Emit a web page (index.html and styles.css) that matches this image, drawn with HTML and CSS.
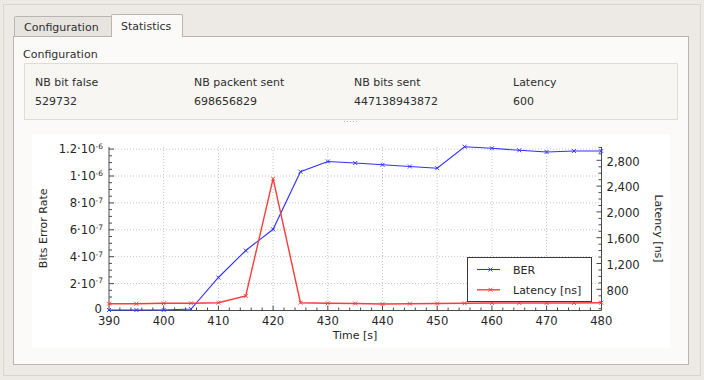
FILE: index.html
```html
<!DOCTYPE html>
<html>
<head>
<meta charset="utf-8">
<link rel="stylesheet" href="styles.css">
</head>
<body>
<div class="window">
  <div class="frame">
    <div class="tabbar">
      <div class="tab">Configuration</div>
      <div class="tab tab-active">Statistics</div>
    </div>
    <div class="pane">
      <div class="group-title">Configuration</div>
      <div class="group">
        <div class="cell">NB bit false</div>
        <div class="cell">NB packent sent</div>
        <div class="cell">NB bits sent</div>
        <div class="cell">Latency</div>
        <div class="cell">529732</div>
        <div class="cell">698656829</div>
        <div class="cell">447138943872</div>
        <div class="cell">600</div>
      </div>
      <div class="splitter"><div class="grip"></div></div>
      <div class="chart">
        <svg class="plot" width="638" height="214" viewBox="32 133 638 214" xmlns="http://www.w3.org/2000/svg">
          <!-- grid -->
          <g class="grid">
            <path d="M163.7 146V309M218.4 146V309M273.1 146V309M327.8 146V309M382.5 146V309M437.2 146V309M491.9 146V309M546.6 146V309"/>
            <path d="M109 282.6H601M109 255.7H601M109 228.8H601M109 201.9H601M109 175H601M109 148.1H601"/>
          </g>
          <!-- axes -->
          <g class="axis">
            <path d="M109 146V309.5H601.5V146"/>
            <!-- left major -->
            <path d="M109 309.5h5M109 282.6h5M109 255.7h5M109 228.8h5M109 201.9h5M109 175h5M109 148.1h5"/>
            <!-- left minor -->
            <path d="M109 302.8h3M109 296h3M109 289.3h3M109 275.9h3M109 269.2h3M109 262.4h3M109 249h3M109 242.3h3M109 235.5h3M109 222.1h3M109 215.4h3M109 208.6h3M109 195.2h3M109 188.5h3M109 181.7h3M109 168.3h3M109 161.6h3M109 154.8h3"/>
            <!-- right major -->
            <path d="M601.5 288.3h-5M601.5 262.5h-5M601.5 236.7h-5M601.5 210.9h-5M601.5 185.1h-5M601.5 159.3h-5"/>
            <!-- right minor -->
            <path d="M601.5 307.7h-3M601.5 301.2h-3M601.5 294.8h-3M601.5 281.9h-3M601.5 275.4h-3M601.5 269h-3M601.5 256.1h-3M601.5 249.6h-3M601.5 243.2h-3M601.5 230.3h-3M601.5 223.8h-3M601.5 217.4h-3M601.5 204.5h-3M601.5 198h-3M601.5 191.6h-3M601.5 178.7h-3M601.5 172.2h-3M601.5 165.8h-3M601.5 152.9h-3M601.5 146.4h-3"/>
            <!-- bottom major -->
            <path d="M163.7 309.5v-5M218.4 309.5v-5M273.1 309.5v-5M327.8 309.5v-5M382.5 309.5v-5M437.2 309.5v-5M491.9 309.5v-5M546.6 309.5v-5"/>
            <!-- bottom minor -->
            <path d="M119.9 309.5v-3M130.9 309.5v-3M141.8 309.5v-3M152.8 309.5v-3M174.6 309.5v-3M185.6 309.5v-3M196.5 309.5v-3M207.5 309.5v-3M229.3 309.5v-3M240.3 309.5v-3M251.2 309.5v-3M262.2 309.5v-3M284 309.5v-3M295 309.5v-3M305.9 309.5v-3M316.9 309.5v-3M338.7 309.5v-3M349.7 309.5v-3M360.6 309.5v-3M371.6 309.5v-3M393.4 309.5v-3M404.4 309.5v-3M415.3 309.5v-3M426.3 309.5v-3M448.1 309.5v-3M459.1 309.5v-3M470 309.5v-3M481 309.5v-3M502.8 309.5v-3M513.8 309.5v-3M524.7 309.5v-3M535.7 309.5v-3M557.5 309.5v-3M568.5 309.5v-3M579.4 309.5v-3M590.4 309.5v-3"/>
          </g>
          <!-- tick labels -->
          <g class="ticklabels">
            <text x="103" y="152.4" text-anchor="end">1.2·10<tspan class="sup" dy="-4.5">-6</tspan></text>
            <text x="103" y="179.3" text-anchor="end">1·10<tspan class="sup" dy="-4.5">-6</tspan></text>
            <text x="103" y="206.2" text-anchor="end">8·10<tspan class="sup" dy="-4.5">-7</tspan></text>
            <text x="103" y="233.1" text-anchor="end">6·10<tspan class="sup" dy="-4.5">-7</tspan></text>
            <text x="103" y="260" text-anchor="end">4·10<tspan class="sup" dy="-4.5">-7</tspan></text>
            <text x="103" y="286.9" text-anchor="end">2·10<tspan class="sup" dy="-4.5">-7</tspan></text>
            <text x="102" y="312" text-anchor="end">0</text>

            <text x="109" y="323.5" text-anchor="middle">390</text>
            <text x="163.7" y="323.5" text-anchor="middle">400</text>
            <text x="218.4" y="323.5" text-anchor="middle">410</text>
            <text x="273.1" y="323.5" text-anchor="middle">420</text>
            <text x="327.8" y="323.5" text-anchor="middle">430</text>
            <text x="382.5" y="323.5" text-anchor="middle">440</text>
            <text x="437.2" y="323.5" text-anchor="middle">450</text>
            <text x="491.9" y="323.5" text-anchor="middle">460</text>
            <text x="546.6" y="323.5" text-anchor="middle">470</text>
            <text x="601.3" y="323.5" text-anchor="middle">480</text>

            <text x="606.5" y="164.6">2,800</text>
            <text x="606.5" y="190.4">2,400</text>
            <text x="606.5" y="216.2">2,000</text>
            <text x="606.5" y="242">1,600</text>
            <text x="606.5" y="267.8">1,200</text>
            <text x="606.5" y="293.6">800</text>
          </g>
          <!-- axis titles -->
          <g class="titles">
            <text transform="translate(47.3 227.3) rotate(-90)" text-anchor="middle">Bits Error Rate</text>
            <text transform="translate(654.8 227.5) rotate(90)" text-anchor="middle">Latency [ns]</text>
            <text x="355" y="337.5" text-anchor="middle">Time [s]</text>
          </g>
          <!-- curves -->
          <polyline class="ber" points="109,309 136.35,309 163.7,309 191.05,308 218.4,276.5 245.75,249.5 273.1,228.3 300.45,170.7 327.8,160.5 355.15,162 382.5,163.8 409.85,165.5 437.2,167.2 464.55,145.7 491.9,147.3 519.25,149.3 546.6,151 573.95,150 601.3,150"/>
          <path class="ber-mk" d="M107 307l4 4m-4 0l4-4M134.4 307l4 4m-4 0l4-4M161.7 307l4 4m-4 0l4-4M189 306l4 4m-4 0l4-4M216.4 274.5l4 4m-4 0l4-4M243.8 247.5l4 4m-4 0l4-4M271.1 226.3l4 4m-4 0l4-4M298.5 168.7l4 4m-4 0l4-4M325.8 158.5l4 4m-4 0l4-4M353.2 160l4 4m-4 0l4-4M380.5 161.8l4 4m-4 0l4-4M407.9 163.5l4 4m-4 0l4-4M435.2 165.2l4 4m-4 0l4-4M462.6 143.7l4 4m-4 0l4-4M489.9 145.3l4 4m-4 0l4-4M517.3 147.3l4 4m-4 0l4-4M544.6 149l4 4m-4 0l4-4M572 148l4 4m-4 0l4-4M599.3 148l4 4m-4 0l4-4"/>
          <polyline class="lat" points="109,302.7 136.35,302.7 163.7,302.3 191.05,302.3 218.4,301.7 245.75,295 273.1,177.7 300.45,301.7 327.8,302.3 355.15,302.5 382.5,303 409.85,302.7 437.2,302.5 464.55,302.3 491.9,302 519.25,302 546.6,302 573.95,302 601.3,301.7"/>
          <path class="lat-mk" d="M107 300.7l4 4m-4 0l4-4M134.4 300.7l4 4m-4 0l4-4M161.7 300.3l4 4m-4 0l4-4M189 300.3l4 4m-4 0l4-4M216.4 299.7l4 4m-4 0l4-4M243.8 293l4 4m-4 0l4-4M271.1 175.7l4 4m-4 0l4-4M298.5 299.7l4 4m-4 0l4-4M325.8 300.3l4 4m-4 0l4-4M353.2 300.5l4 4m-4 0l4-4M380.5 301l4 4m-4 0l4-4M407.9 300.7l4 4m-4 0l4-4M435.2 300.5l4 4m-4 0l4-4M462.6 300.3l4 4m-4 0l4-4M489.9 300l4 4m-4 0l4-4M517.3 300l4 4m-4 0l4-4M544.6 300l4 4m-4 0l4-4M572 300l4 4m-4 0l4-4M599.3 299.7l4 4m-4 0l4-4"/>
          <!-- legend -->
          <g class="legend">
            <rect x="467.5" y="256.5" width="124" height="44"/>
            <path class="ber" d="M477 268.5H500"/>
            <path class="ber-mk" d="M488.5 266.5l4 4m-4 0l4-4"/>
            <text x="513" y="272.5">BER</text>
            <path class="lat" d="M477 288.8H500"/>
            <path class="lat-mk" d="M488.5 286.8l4 4m-4 0l4-4"/>
            <text x="513" y="292.8">Latency [ns]</text>
          </g>
        </svg>
      </div>
    </div>
  </div>
</div>
</body>
</html>
```

FILE: styles.css
```css
html, body {
  margin: 0;
  padding: 0;
}
body {
  width: 704px;
  height: 380px;
  overflow: hidden;
  background: #edeae6;
  font-family: "DejaVu Sans", "Liberation Sans", sans-serif;
  font-size: 11px;
  color: #2e2e2e;
}
.window {
  height: 380px;
  padding: 4px 3px 0 3px;
  box-sizing: border-box;
}
.frame {
  width: 698px;
  height: 372px;
  box-sizing: border-box;
  border: 1px solid #d8d4cf;
  padding: 9px 0 0 9px;
}
.tabbar {
  display: flex;
  align-items: flex-end;
  height: 22px;
}
.tab {
  box-sizing: border-box;
  height: 20px;
  width: 98px;
  margin-left: 1px;
  padding: 4px 0 0 9px;
  line-height: 14px;
  background: #e7e4e0;
  border: 1px solid #b9b5b0;
  border-bottom: none;
  border-radius: 2px 2px 0 0;
  white-space: nowrap;
}
.tab-active {
  position: relative;
  z-index: 1;
  width: 72px;
  height: 23px;
  margin-left: -1px;
  margin-bottom: -1px;
  padding-top: 5px;
  background: #fcfaf8;
}
.pane {
  box-sizing: border-box;
  width: 676px;
  height: 329px;
  border: 1px solid #b9b5b0;
  background: #fcfaf8;
  padding: 11px 0 0 10px;
}
.group-title {
  line-height: 14px;
  margin-left: -1px;
}
.group {
  box-sizing: border-box;
  width: 654px;
  margin-top: 1px;
  border: 1px solid #dfdbd6;
  background: #f8f6f3;
  padding: 12px 0 10px 10px;
  display: grid;
  grid-template-columns: 159px 160px 159px 1fr;
  row-gap: 5px;
  line-height: 14px;
}
.cell {
  white-space: nowrap;
}
.splitter {
  height: 13px;
}
.grip {
  margin: 1px 0 0 320px;
  width: 15px;
  height: 1px;
  background: repeating-linear-gradient(to right, #bdb9b4 0 1px, transparent 1px 3px);
}
.chart {
  margin-left: 8px;
  width: 638px;
  height: 214px;
  background: #ffffff;
}
.plot {
  display: block;
}
.grid path {
  fill: none;
  stroke: #c4c4c4;
  stroke-width: 1;
  stroke-dasharray: 1 2;
}
.axis path {
  fill: none;
  stroke: #4a4a4a;
  stroke-width: 1;
}
.ticklabels text {
  font-family: "DejaVu Sans", sans-serif;
  font-size: 11.6px;
  fill: #262626;
}
.ticklabels .sup {
  font-size: 7.5px;
}
.titles text, .legend text {
  font-family: "DejaVu Sans", sans-serif;
  font-size: 11px;
  fill: #262626;
}
.ber {
  fill: none;
  stroke: #3030ff;
  stroke-width: 1.1;
}
.ber-mk {
  fill: none;
  stroke: #3030ff;
  stroke-width: 0.9;
}
.lat {
  fill: none;
  stroke: #ff3a3a;
  stroke-width: 1.4;
}
.lat-mk {
  fill: none;
  stroke: #ff3a3a;
  stroke-width: 0.9;
}
.legend rect {
  fill: #ffffff;
  stroke: #3a3a3a;
  stroke-width: 1;
}
```
